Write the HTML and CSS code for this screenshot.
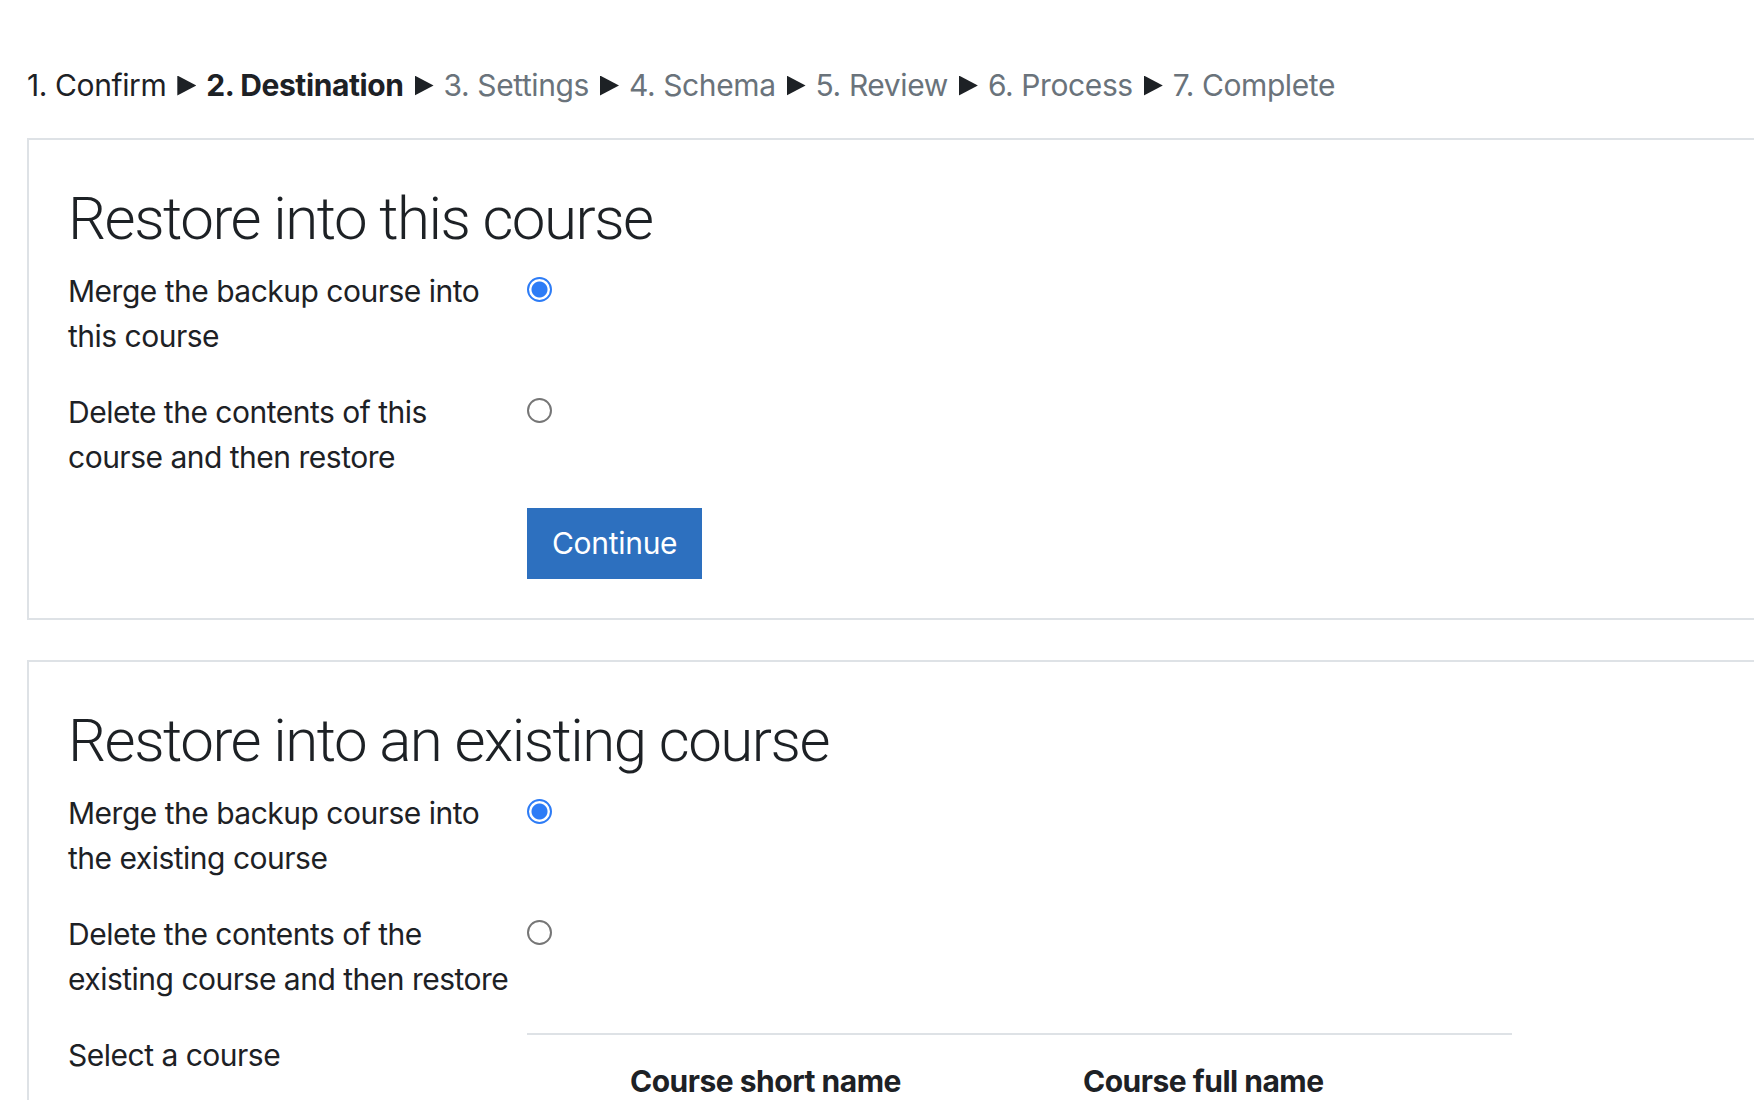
FILE: index.html
```html
<!DOCTYPE html>
<html lang="en">
<head>
<meta charset="utf-8">
<title>Restore - Destination</title>
<link rel="stylesheet" href="styles.css">
</head>
<body>
<div class="page">
  <div class="steps">
    <span class="step done">1. Confirm</span><span class="arrow"></span>
    <span class="step current">2. Destination</span><span class="arrow"></span>
    <span class="step todo">3. Settings</span><span class="arrow"></span>
    <span class="step todo">4. Schema</span><span class="arrow"></span>
    <span class="step todo">5. Review</span><span class="arrow"></span>
    <span class="step todo">6. Process</span><span class="arrow"></span>
    <span class="step todo">7. Complete</span>
  </div>

  <section class="card">
    <h2 class="card-title">Restore into this course</h2>
    <div class="form-row">
      <label class="form-label" for="t1">Merge the backup course into this course</label>
      <div class="form-ctl"><input class="radio" type="radio" id="t1" name="target1" checked></div>
    </div>
    <div class="form-row">
      <label class="form-label" for="t2">Delete the contents of this course and then restore</label>
      <div class="form-ctl"><input class="radio" type="radio" id="t2" name="target1"></div>
    </div>
    <div class="form-row last">
      <div class="form-label"></div>
      <div class="form-ctl"><button class="btn" type="button">Continue</button></div>
    </div>
  </section>

  <section class="card">
    <h2 class="card-title">Restore into an existing course</h2>
    <div class="form-row">
      <label class="form-label" for="e1">Merge the backup course into the existing course</label>
      <div class="form-ctl"><input class="radio" type="radio" id="e1" name="target2" checked></div>
    </div>
    <div class="form-row">
      <label class="form-label" for="e2">Delete the contents of the existing course and then restore</label>
      <div class="form-ctl"><input class="radio" type="radio" id="e2" name="target2"></div>
    </div>
    <div class="form-row">
      <div class="form-label">Select a course</div>
      <div class="form-ctl">
        <table class="course-table">
          <thead>
            <tr><th class="col-pick"></th><th class="col-short">Course short name</th><th class="col-full">Course full name</th></tr>
          </thead>
        </table>
      </div>
    </div>
  </section>
</div>
</body>
</html>
```

FILE: styles.css
```css
html, body {
  margin: 0;
  padding: 0;
  background: #fff;
}
body {
  font-family: Inter, "Liberation Sans", sans-serif;
  font-size: 30px;
  line-height: 45px;
  letter-spacing: -0.5px;
  color: #1d2125;
  overflow: hidden;
}
.page {
  width: 1800px;
  padding: 63px 0 0 27px;
}
.steps {
  display: flex;
  align-items: center;
  height: 45px;
  white-space: nowrap;
  letter-spacing: -0.4px;
}
.step.done { color: #1d2125; }
.step.current { font-weight: 700; color: #1d2125; }
.step.todo { color: #6a737b; }
.arrow {
  display: inline-block;
  width: 19px;
  height: 20px;
  margin: 0 10px 0 11px;
  background: #1d2125;
  clip-path: polygon(0 0, 100% 50%, 0 100%);
}
.card {
  margin-top: 30px;
  border: 2px solid #dee2e6;
  border-right: none;
  padding: 43px 0 39px 39px;
}
.card + .card { margin-top: 40px; }
.card-title {
  margin: 0 0 14px;
  font-family: Roboto, Inter, sans-serif;
  font-size: 60px;
  line-height: 72px;
  font-weight: 300;
  letter-spacing: -1.5px;
}
.form-row {
  display: grid;
  grid-template-columns: 459px 1fr;
  margin-bottom: 31px;
}
.form-row.last {
  margin-top: -3px;
  margin-bottom: 0;
}
.form-label {
  padding-right: 4px;
}
.form-ctl {
  min-height: 45px;
}
.radio {
  appearance: none;
  -webkit-appearance: none;
  display: block;
  width: 25px;
  height: 25px;
  margin: 8px 0 0;
  border: 2px solid #767676;
  border-radius: 50%;
  background: #fff;
}
.radio:checked {
  border: 2.5px solid #2d7cf6;
  background: radial-gradient(circle, #2d7cf6 0, #2d7cf6 7.5px, #fff 8.5px);
}
.btn {
  display: inline-block;
  font-family: inherit;
  font-size: 30px;
  line-height: 45px;
  letter-spacing: -0.3px;
  padding: 13px 25px;
  border: 0;
  background: #2d70bf;
  color: #fff;
  border-radius: 0;
}
.course-table {
  width: 985px;
  border-collapse: collapse;
  border-top: 2px solid #dee2e6;
}
.course-table th {
  padding: 24px;
  text-align: left;
  font-weight: 700;
  white-space: nowrap;
}
.course-table .col-pick { width: 31px; }
.course-table .col-short { width: 405px; }
```
